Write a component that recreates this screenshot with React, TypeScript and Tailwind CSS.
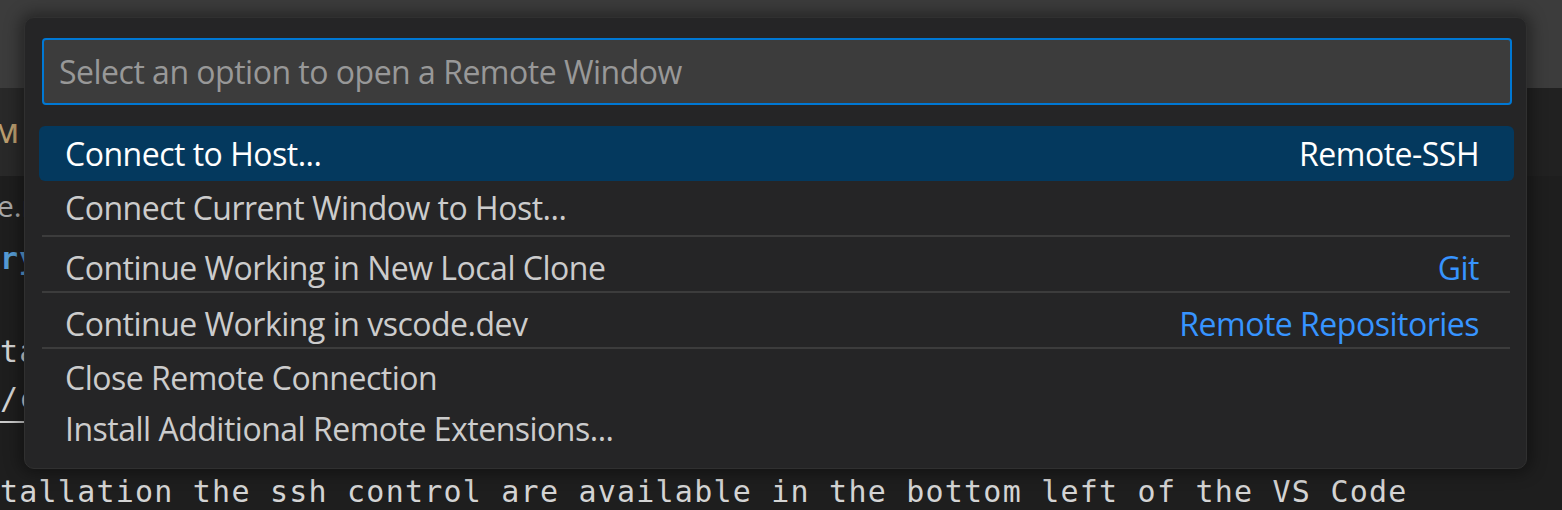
import React from "react";

const SANS = "font-['Open_Sans','Noto_Sans',sans-serif]";
const MONO = "font-['DejaVu_Sans_Mono','Liberation_Mono',monospace]";

type ItemProps = {
  label: string;
  desc?: string;
  active?: boolean;
  sep?: boolean;
  boxClass: string;
};

function Item({ label, desc, active = false, sep = false, boxClass }: ItemProps) {
  return (
    <div>
      {sep && <div className="ml-[3px] mr-[4px] h-[2px] bg-[#3c3c3c]" />}
      <div
        className={`flex items-center justify-between rounded-[6px] pl-[26px] pr-[35px] ${boxClass} ${
          active ? "bg-[#04395e] text-white" : "text-[#cccccc]"
        }`}
      >
        <span className="leading-none whitespace-nowrap">{label}</span>
        {desc && (
          <span className={`leading-none whitespace-nowrap ${active ? "text-white" : "text-[#3794ff]"}`}>{desc}</span>
        )}
      </div>
    </div>
  );
}

export default function App() {
  return (
    <div className="relative h-[510px] w-[1562px] overflow-hidden bg-[#1e1e1e]">
      {/* title bar */}
      <div className="h-[88px] bg-[#3c3c3c]" />
      {/* tab row */}
      <div className="flex h-[88px]">
        <div className="flex w-[240px] items-center bg-[#292929]">
          <span className={`${SANS} ml-[-6px] text-[27px] font-semibold leading-none text-[#bb9d6e]`}>M</span>
        </div>
        <div className="flex-1 bg-[#212121]" />
      </div>
      {/* breadcrumb */}
      <div className="flex h-[59.5px] items-center">
        <span className={`${SANS} ml-[-3px] text-[30px] leading-none text-[#a8a8a8]`}>e.md</span>
      </div>
      {/* editor lines */}
      <div className={`${MONO} text-[30px] leading-[46.8px] tracking-[1.22px] text-[#d4d4d4]`}>
        <div className="h-[46.8px] whitespace-nowrap font-bold text-[#569cd6]">ry Remote SSH</div>
        <div className="h-[46.8px]" />
        <div className="h-[46.8px] whitespace-nowrap">tall the Remote - SSH extension</div>
        <div className="flex h-[46.8px]">
          <span className="block h-full whitespace-nowrap border-b-2 border-[#cccccc]">/code.visualstudio.com</span>
        </div>
        <div className="h-[46.8px]" />
        <div className="h-[46.8px] whitespace-nowrap">
          tallation the ssh control are available in the bottom left of the VS Code
        </div>
      </div>

      {/* quick pick overlay */}
      <div
        className={`${SANS} absolute left-[24px] top-[17px] flex h-[452px] w-[1503px] flex-col rounded-[10px] border border-[#303030] bg-[#252526] text-[32px] tracking-[-0.5px] shadow-[0_0_16px_4px_rgba(0,0,0,0.4)]`}
      >
        <div className="ml-[17px] mr-[14px] mt-[20px] flex h-[67px] items-center rounded-[4px] border-2 border-[#0078d4] bg-[#3c3c3c] pl-[15px]">
          <span className="leading-none whitespace-nowrap text-[#989898]">Select an option to open a Remote Window</span>
        </div>
        <div className="ml-[14px] mr-[12px] mt-[21px] flex flex-col">
          <Item label="Connect to Host..." desc="Remote-SSH" active boxClass="h-[55px]" />
          <Item label="Connect Current Window to Host..." boxClass="h-[54px]" />
          <Item label="Continue Working in New Local Clone" desc="Git" sep boxClass="h-[54px] pt-[8px]" />
          <Item label="Continue Working in vscode.dev" desc="Remote Repositories" sep boxClass="h-[54px] pt-[8px]" />
          <Item label="Close Remote Connection" sep boxClass="h-[54px] pt-[4px]" />
          <Item label="Install Additional Remote Extensions..." boxClass="h-[52px]" />
        </div>
      </div>
    </div>
  );
}
